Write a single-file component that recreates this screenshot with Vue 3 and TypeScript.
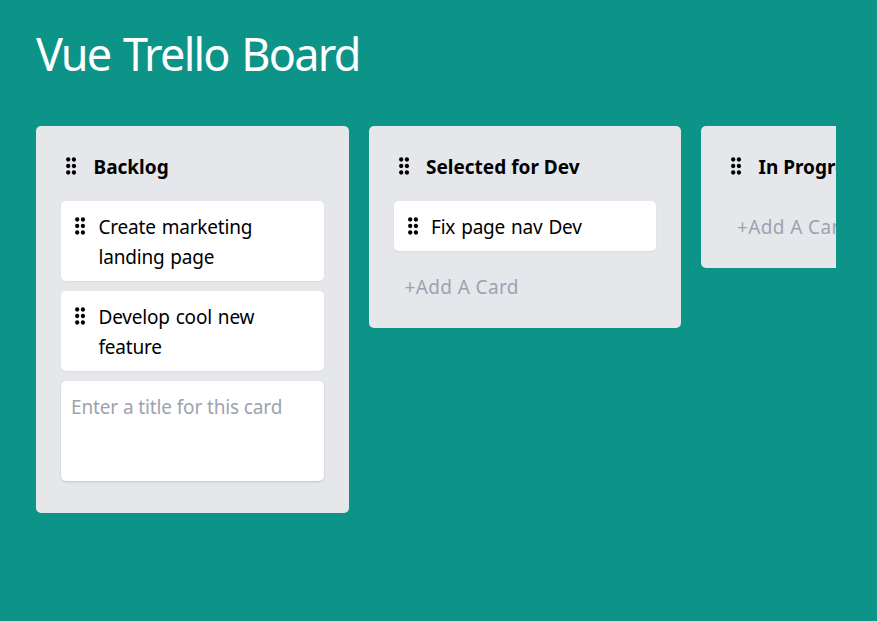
<script setup lang="ts">
interface Column {
  title: string
  cards: string[]
  editing?: boolean
}

const columns: Column[] = [
  { title: 'Backlog', cards: ['Create marketing landing page', 'Develop cool new feature'], editing: true },
  { title: 'Selected for Dev', cards: ['Fix page nav Dev'] },
  { title: 'In Progress', cards: [] },
]

const dots = [
  [2.2, 2.5], [7.9, 2.5],
  [2.2, 9], [7.9, 9],
  [2.2, 15.5], [7.9, 15.5],
]
</script>

<template>
  <div class="page">
    <h1>Vue Trello Board</h1>
    <main class="board">
      <section v-for="column in columns" :key="column.title" class="column">
        <header>
          <svg class="handle" viewBox="0 0 10 18">
            <circle v-for="([x, y], i) in dots" :key="i" :cx="x" :cy="y" r="2.15" />
          </svg>
          <h2>{{ column.title }}</h2>
        </header>
        <article v-for="card in column.cards" :key="card" class="card">
          <svg class="handle" viewBox="0 0 10 18">
            <circle v-for="([x, y], i) in dots" :key="i" :cx="x" :cy="y" r="2.15" />
          </svg>
          <span>{{ card }}</span>
        </article>
        <textarea v-if="column.editing" placeholder="Enter a title for this card"></textarea>
        <button v-else type="button">+Add A Card</button>
      </section>
    </main>
  </div>
</template>

<style>
body {
  background: #0d9488;
  overflow: hidden;
}
</style>

<style scoped>
* {
  box-sizing: border-box;
}
.page {
  height: 621px;
  padding: 24px 41px 0 36px;
  font-family: "Noto Sans", sans-serif;
  font-size: 19px;
  line-height: 30px;
  letter-spacing: -0.13px;
  color: #000;
  overflow: hidden;
}
h1 {
  margin: 0 0 42px;
  font-size: 45px;
  line-height: 60px;
  font-weight: 400;
  letter-spacing: -1.75px;
  word-spacing: 2.6px;
  color: #fff;
}
.board {
  display: flex;
  align-items: flex-start;
  gap: 20px;
  overflow: hidden;
}
.column {
  flex: 0 0 312.5px;
  padding: 25px 25px 17px;
  border-radius: 5px;
  background: #e5e7eb;
}
header {
  display: flex;
  padding: 0 5px;
  margin-bottom: 20px;
}
h2 {
  margin: 0;
  padding-top: 2px;
  font-size: 19px;
  line-height: 28px;
  font-weight: 700;
  letter-spacing: 0;
  white-space: nowrap;
}
.handle {
  flex: none;
  width: 10px;
  height: 18px;
}
header .handle {
  margin: 6px 17.5px 0 0;
}
.card {
  display: flex;
  padding: 11px 10px 9px;
  margin-bottom: 10px;
  border-radius: 5px;
  background: #fff;
  box-shadow: 0 1px 2px rgba(0, 0, 0, 0.06);
  letter-spacing: -0.2px;
  word-spacing: 1.2px;
}
.card .handle {
  margin: 5px 13.5px 0 4px;
}
textarea {
  display: block;
  width: 100%;
  height: 100px;
  margin-bottom: 15px;
  padding: 11px 10px 9px;
  border: 0;
  border-radius: 5px;
  outline: 0;
  resize: none;
  background: #fff;
  box-shadow: 0 1px 3px rgba(0, 0, 0, 0.1), 0 1px 2px rgba(0, 0, 0, 0.06);
  font: inherit;
  letter-spacing: inherit;
}
textarea::placeholder {
  color: #9ca3af;
  opacity: 1;
}
button {
  display: block;
  padding: 11px 10px 9px 11px;
  border: 0;
  background: none;
  font: inherit;
  letter-spacing: 0.38px;
  white-space: nowrap;
  color: #9ca3af;
}
</style>
